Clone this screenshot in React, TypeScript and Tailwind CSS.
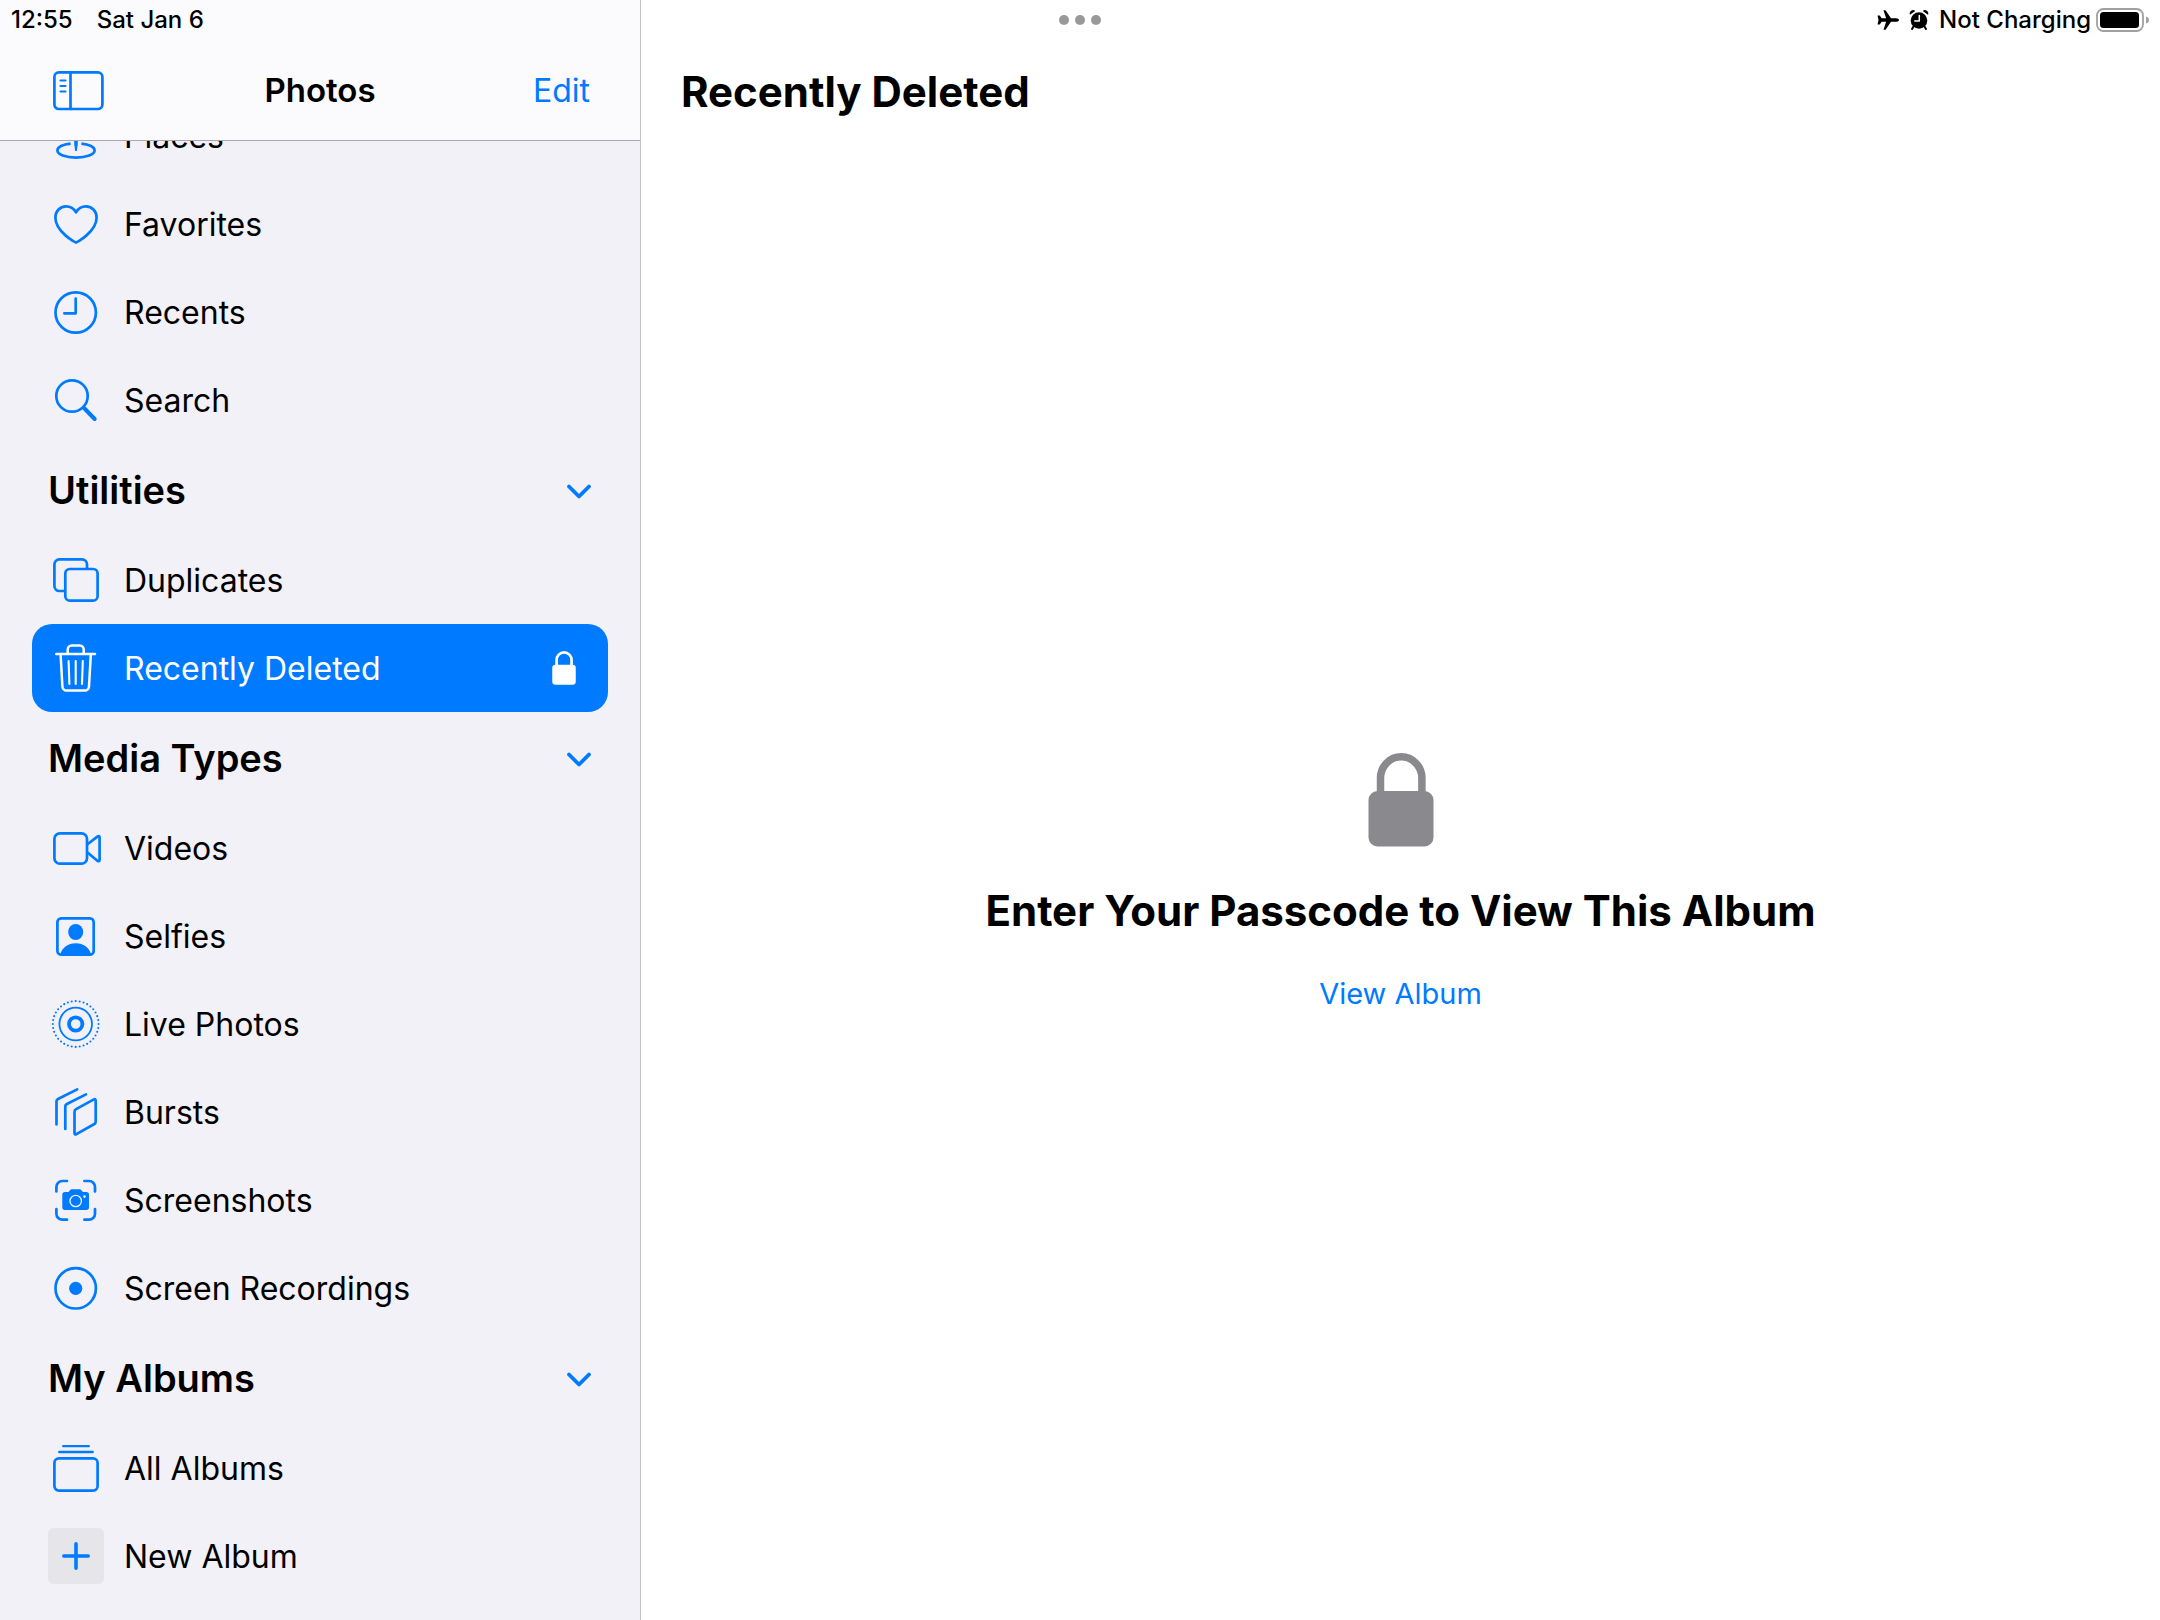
import React, { useState } from "react";
import type { ReactNode } from "react";

const stroke = {
  fill: "none",
  stroke: "currentColor",
  strokeWidth: 2.7,
  strokeLinecap: "round" as const,
  strokeLinejoin: "round" as const,
};

function Glyph({ children }: { children: ReactNode }) {
  return (
    <svg viewBox="0 0 56 56" className="size-14 shrink-0" aria-hidden="true">
      {children}
    </svg>
  );
}

const PlacesIcon = () => (
  <Glyph>
    <g {...stroke}>
      <circle cx="28" cy="12" r="7" />
      <path d="M22.6 35.6C14.900 36.3 9.400 39 9.400 42.600c0 4 8.200 7 18.600 7s18.600-3 18.600-7c0-3.600-5.500-6.300-13.200-7" strokeLinecap="butt" />
    </g>
    <path d="M26.200 20h3.600v16l-1 7h-1.600l-1-7z" fill="currentColor" />
  </Glyph>
);

const HeartIcon = () => (
  <Glyph>
    <path
      {...stroke}
      d="M28 46.600C27.300 46.600 7.400 35.600 7.400 21.800C7.400 15 12.200 10.400 18 10.400C22.700 10.400 26 12.800 28 16.400C30 12.800 33.300 10.400 38 10.400C43.800 10.400 48.600 15 48.600 21.800C48.600 35.600 28.700 46.600 28 46.600Z"
    />
  </Glyph>
);

const ClockIcon = () => (
  <Glyph>
    <g {...stroke}>
      <circle cx="27.700" cy="28.500" r="20.200" />
      <path d="M27.700 14.500V29.300H16.300" />
    </g>
  </Glyph>
);

const SearchIcon = () => (
  <Glyph>
    <g {...stroke}>
      <circle cx="24" cy="24" r="15.700" />
      <path d="M36 36L46.700 47" strokeWidth="4" />
    </g>
  </Glyph>
);

const DuplicatesIcon = () => (
  <Glyph>
    <g {...stroke}>
      <path d="M16 39H11.400a5 5 0 0 1-5-5V12.400a5 5 0 0 1 5-5H34a5 5 0 0 1 5 5V16" />
      <rect x="17.300" y="17" width="32.300" height="31.700" rx="4.500" />
    </g>
  </Glyph>
);

const TrashIcon = () => (
  <Glyph>
    <g {...stroke} strokeWidth="2.500">
      <path d="M8.300 14H47" />
      <path d="M19.700 13.500V9.500a4 4 0 0 1 4-4h8a4 4 0 0 1 4 4v4" />
      <path d="M12.600 14.500L14.400 46.500a4.200 4.200 0 0 0 4.200 4h18.200a4.200 4.200 0 0 0 4.200-4L42.800 14.500" />
      <path d="M20.600 21L21.400 44M27.700 21V44M34.800 21L34 44" strokeWidth="2.100" />
    </g>
  </Glyph>
);

const VideoIcon = () => (
  <Glyph>
    <g {...stroke}>
      <rect x="6.400" y="13.400" width="32.600" height="30.300" rx="5.500" />
      <path d="M39.500 24.300L49.700 16.400Q51.600 15.500 51.600 17.600V39.800Q51.600 41.900 49.700 41L39.500 32.500" />
    </g>
  </Glyph>
);

const SelfieIcon = () => (
  <Glyph>
    <rect {...stroke} x="9.400" y="10.400" width="36.300" height="36.300" rx="3.800" />
    <ellipse cx="27.700" cy="24" rx="7.500" ry="8" fill="currentColor" />
    <path d="M12.300 46.700C14 39.500 20 35.300 27.700 35.300S41.400 39.500 43 46.700z" fill="currentColor" />
  </Glyph>
);

const dots = Array.from({ length: 36 }, (_, i) => {
  const a = (i * Math.PI) / 18;
  return { x: 27.7 + 22.9 * Math.sin(a), y: 28 - 22.9 * Math.cos(a) };
});

const LiveIcon = () => (
  <Glyph>
    <circle {...stroke} cx="27.700" cy="28" r="6.700" strokeWidth="3.800" />
    <circle {...stroke} cx="27.700" cy="28" r="16.300" strokeWidth="1.800" />
    {dots.map((d, i) => (
      <circle key={i} cx={d.x} cy={d.y} r="1.050" fill="currentColor" />
    ))}
  </Glyph>
);

const BurstsIcon = () => (
  <Glyph>
    <g {...stroke}>
      <path d="M29.200 5.400L10 15Q8.500 15.800 8.500 17.300V40.500" />
      <path d="M38 10.400L18.900 20Q17.300 20.800 17.300 22.300V45" />
      <path d="M28.100 25.100L45.900 15.400Q47.700 14.700 47.700 16.600V37.800Q47.700 39.300 46.400 40L28.400 50.200Q26.500 51 26.500 49V27.800Q26.500 26 28.100 25.100Z" />
    </g>
  </Glyph>
);

const ScreenshotIcon = () => (
  <Glyph>
    <path
      {...stroke}
      d="M8.400 19.500V15a6 6 0 0 1 6-6H19M36.400 9H41a6 6 0 0 1 6 6v4.500M47 37v4.700a6 6 0 0 1-6 6h-4.600M19 47.700h-4.600a6 6 0 0 1-6-6V37"
    />
    <path
      fill="currentColor"
      d="M17 20h3.500l1.500-1.800q.8-.9 2-.9h7.400q1.200 0 2 .9L34.900 20H38.300a2.700 2.700 0 0 1 2.700 2.700V35.300a2.700 2.700 0 0 1-2.700 2.700H17a2.700 2.700 0 0 1-2.700-2.700V22.700A2.700 2.700 0 0 1 17 20z"
    />
    <circle cx="27.700" cy="29" r="5.700" fill="none" stroke="#f2f1f7" strokeWidth="1.300" />
    <circle cx="36.500" cy="24.600" r="1.300" fill="#f2f1f7" />
  </Glyph>
);

const RecordIcon = () => (
  <Glyph>
    <circle {...stroke} cx="27.700" cy="28.300" r="20.200" />
    <circle cx="27.700" cy="28.300" r="6.600" fill="currentColor" />
  </Glyph>
);

const AlbumsIcon = () => (
  <Glyph>
    <g {...stroke}>
      <rect x="6.400" y="18.400" width="43.200" height="32.200" rx="4.500" />
      <path d="M15.200 6.200H40.800M11.200 12H44.800" strokeWidth="2.300" />
    </g>
  </Glyph>
);

const PlusIcon = () => (
  <span className="block size-14 shrink-0 rounded-md bg-[#e5e5ea]">
    <Glyph>
      <path {...stroke} strokeWidth="3.600" d="M15.800 28H40.200M28 15.800V40.200" />
    </Glyph>
  </span>
);

function Lock({ className }: { className: string }) {
  return (
    <svg viewBox="0 0 66 94" className={className} aria-hidden="true">
      <path d="M12.500 42V25a20.700 21.200 0 0 1 41.400 0V42" fill="none" stroke="currentColor" strokeWidth="7.500" />
      <rect x="0.500" y="38" width="65" height="55.500" rx="9" fill="currentColor" />
    </svg>
  );
}

type Item = { label: string; icon: ReactNode; locked?: boolean };

const topItems: Item[] = [
  { label: "Places", icon: <PlacesIcon /> },
  { label: "Favorites", icon: <HeartIcon /> },
  { label: "Recents", icon: <ClockIcon /> },
  { label: "Search", icon: <SearchIcon /> },
];

const groups: { title: string; items: Item[] }[] = [
  {
    title: "Utilities",
    items: [
      { label: "Duplicates", icon: <DuplicatesIcon /> },
      { label: "Recently Deleted", icon: <TrashIcon />, locked: true },
    ],
  },
  {
    title: "Media Types",
    items: [
      { label: "Videos", icon: <VideoIcon /> },
      { label: "Selfies", icon: <SelfieIcon /> },
      { label: "Live Photos", icon: <LiveIcon /> },
      { label: "Bursts", icon: <BurstsIcon /> },
      { label: "Screenshots", icon: <ScreenshotIcon /> },
      { label: "Screen Recordings", icon: <RecordIcon /> },
    ],
  },
  {
    title: "My Albums",
    items: [
      { label: "All Albums", icon: <AlbumsIcon /> },
      { label: "New Album", icon: <PlusIcon /> },
    ],
  },
];

function Row({ item, selected, onSelect }: { item: Item; selected: boolean; onSelect: () => void }) {
  return (
    <li>
      <button
        type="button"
        onClick={onSelect}
        aria-current={selected ? "page" : undefined}
        className={
          selected
            ? "flex h-[88px] w-full items-center gap-5 rounded-[20px] bg-[#007aff] pr-8 pl-4 text-left text-white"
            : "flex h-[88px] w-full items-center gap-5 rounded-[20px] pr-8 pl-4 text-left text-[#007aff]"
        }
      >
        {item.icon}
        <span className={selected ? "grow pt-0.5 text-[32px] text-white" : "grow pt-0.5 text-[32px] text-black"}>
          {item.label}
        </span>
        {item.locked && <Lock className="h-[34px] w-6 text-white" />}
      </button>
    </li>
  );
}

function Group({ title, items, current, onSelect }: { title: string; items: Item[]; current: string; onSelect: (l: string) => void }) {
  const [open, setOpen] = useState(true);
  return (
    <section>
      <h2>
        <button
          type="button"
          aria-expanded={open}
          onClick={() => setOpen(!open)}
          className="flex h-[92px] w-full items-center justify-between px-4 text-[38px] font-semibold"
        >
          {title}
          <svg viewBox="0 0 26 16" className="mt-0.5 h-4 w-[26px] text-[#007aff]" aria-hidden="true">
            <path {...stroke} strokeWidth="3.800" d="M3 3.500L13 13.500L23 3.500" />
          </svg>
        </button>
      </h2>
      {open && (
        <ul>
          {items.map((it) => (
            <Row key={it.label} item={it} selected={it.label === current} onSelect={() => onSelect(it.label)} />
          ))}
        </ul>
      )}
    </section>
  );
}

function StatusBar() {
  return (
    <header className="absolute inset-x-0 top-0 z-20 grid h-10 grid-cols-3 items-center px-[11px] text-[24px] font-medium">
      <div className="flex gap-6">
        <time>12:55</time>
        <span>Sat Jan 6</span>
      </div>
      <button type="button" aria-label="Multitasking" className="flex gap-1.5 justify-self-center">
        <span className="size-2.5 rounded-full bg-[#999999]" />
        <span className="size-2.5 rounded-full bg-[#999999]" />
        <span className="size-2.5 rounded-full bg-[#999999]" />
      </button>
      <div className="flex items-center justify-self-end">
        <svg viewBox="0 0 22 20" className="mr-2.5 h-5 w-[22px]" aria-label="Airplane mode">
          <path d="M22 10c0 1.100-1.500 1.800-3.200 1.800H14L8.900 19.200q-.3.500-.9.500H6.500l2.600-7.900H4.700L2.700 14.400H.6L1.500 10L.6 5.600h2.100L4.700 8.200h4.400L6.500.3H8q.6 0 .9.500L14 8.200h4.800C20.500 8.200 22 8.900 22 10z" />
        </svg>
        <svg viewBox="0 0 20 22" className="mr-2.5 h-[22px] w-5" aria-label="Alarm set">
          <circle cx="10" cy="11.500" r="8.300" />
          <path d="M4.500 17.500L3 20M15.500 17.500L17 20" stroke="black" strokeWidth="2" strokeLinecap="round" />
          <path d="M1 5.800A3.300 3.300 0 0 1 6.300 2.100zM19 5.800A3.300 3.300 0 0 0 13.700 2.100z" />
          <path d="M10.300 6.500V12H5.800" fill="none" stroke="white" strokeWidth="1.500" strokeLinecap="round" strokeLinejoin="round" />
        </svg>
        <span>Not Charging</span>
        <svg viewBox="0 0 54 26" className="ml-1 h-[26px] w-[54px]" aria-label="Battery full">
          <rect x="2" y="2" width="46" height="22" rx="6.500" fill="none" stroke="#a0a0a0" strokeWidth="1.800" />
          <rect x="5" y="5" width="39" height="16" rx="3.500" />
          <path d="M51 9.500q3 1 3 3.500t-3 3.500z" fill="#a0a0a0" />
        </svg>
      </div>
    </header>
  );
}

export default function App() {
  const [current, setCurrent] = useState("Recently Deleted");
  return (
    <div className="relative flex min-h-screen bg-white font-['Inter',sans-serif] text-black">
      <StatusBar />
      <aside className="flex w-[641px] shrink-0 flex-col border-r border-[#c6c6c8] bg-[#f2f1f7]">
        <div className="z-10 grid h-[141px] grid-cols-3 items-center border-b border-[#a9a8ad] bg-[#fbfbfd] px-12 pt-[42px]">
          <button type="button" aria-label="Hide sidebar" className="justify-self-start text-[#007aff]">
            <svg viewBox="0 0 60 44" className="h-11 w-[60px]" aria-hidden="true">
              <g {...stroke}>
                <rect x="6.400" y="3.400" width="48" height="36.600" rx="4.500" />
                <path d="M22.500 3.500V40" />
                <path d="M12.500 11.500H17.500M12.500 17H17.500M12.500 22.500H17.500" strokeWidth="2.200" />
              </g>
            </svg>
          </button>
          <h1 className="justify-self-center text-[33px] font-semibold">Photos</h1>
          <button type="button" className="mr-0.5 justify-self-end text-[32px] text-[#007aff]">
            Edit
          </button>
        </div>
        <nav aria-label="Albums" className="-mt-[49px] px-8">
          <ul>
            {topItems.map((it) => (
              <Row key={it.label} item={it} selected={it.label === current} onSelect={() => setCurrent(it.label)} />
            ))}
          </ul>
          {groups.map((g) => (
            <Group key={g.title} title={g.title} items={g.items} current={current} onSelect={setCurrent} />
          ))}
        </nav>
      </aside>
      <main className="flex grow flex-col">
        <div className="flex h-[141px] items-center px-10 pt-[42px]">
          <h2 className="text-[42px] font-bold">Recently Deleted</h2>
        </div>
        <div className="flex grow flex-col items-center justify-center pt-2">
          <Lock className="h-[94px] w-[66px] text-[#8a898e]" />
          <h3 className="mt-8 text-[42px] font-bold">Enter Your Passcode to View This Album</h3>
          <button type="button" className="mt-[30px] text-[29px] text-[#007aff]">
            View Album
          </button>
        </div>
      </main>
    </div>
  );
}
